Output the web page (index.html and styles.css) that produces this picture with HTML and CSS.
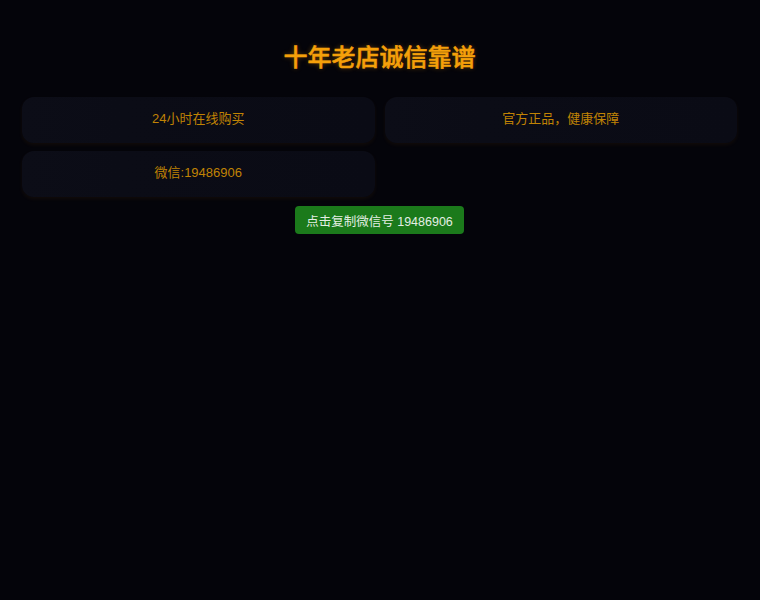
FILE: index.html
```html
<!DOCTYPE html>
<html lang="zh">
<head>
<meta charset="utf-8">
<title>十年老店诚信靠谱</title>
<link rel="stylesheet" href="styles.css">
</head>
<body>
<div class="page">
  <h1 class="title">十年老店诚信靠谱</h1>
  <div class="cards">
    <div class="card">24小时在线购买</div>
    <div class="card">官方正品，健康保障</div>
    <div class="card">微信:19486906</div>
  </div>
  <div class="actions">
    <button class="copy-btn">点击复制微信号 19486906</button>
  </div>
</div>
</body>
</html>
```
FILE: styles.css
```css
html, body {
  margin: 0;
  padding: 0;
  background: #04040a;
  height: 100%;
}
body {
  font-family: "Liberation Sans", "Noto Sans CJK SC", sans-serif;
}
.page {
  padding: 43px 23px 0 22px;
}
.title {
  margin: 0 0 25px;
  text-align: center;
  font-size: 24px;
  line-height: 29px;
  font-weight: 500;
  color: #f5a00a;
  -webkit-text-stroke: 0.5px #f5a00a;
  text-shadow: 0 0 5px rgba(255, 160, 0, 0.4);
}
.cards {
  display: grid;
  grid-template-columns: 1fr 1fr;
  gap: 8px 10px;
}
.card {
  height: 46px;
  box-sizing: border-box;
  padding-bottom: 5px;
  display: flex;
  align-items: center;
  justify-content: center;
  border-radius: 12px;
  background: linear-gradient(90deg, #0c0d17 0%, #0b0c16 28%, #0a0b15 100%);
  box-shadow: 0 2px 4px rgba(255, 150, 0, 0.06);
  color: #c08304;
  font-size: 13px;
}
.actions {
  display: flex;
  justify-content: center;
  margin-top: 9px;
}
.copy-btn {
  height: 28px;
  padding: 0 11.5px;
  border: none;
  border-radius: 4px;
  background: #1b7a1b;
  color: #e4eee4;
  font-family: "Liberation Sans", "Noto Sans CJK SC", sans-serif;
  font-size: 12.5px;
}
```
